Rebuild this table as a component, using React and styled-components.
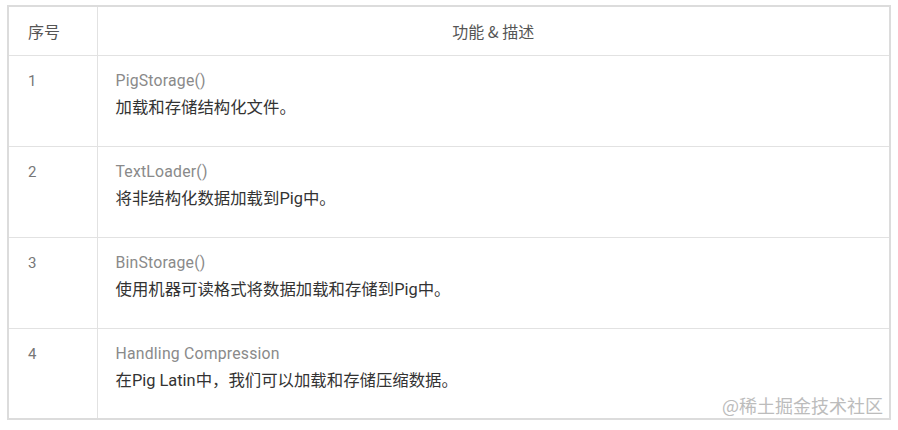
import React from 'react';
import styled, { createGlobalStyle } from 'styled-components';

const Global = createGlobalStyle`
  body {
    margin: 0;
    background: #fff;
    font-family: Roboto, "Noto Sans CJK SC", sans-serif;
  }
`;

const Page = styled.div`
  position: relative;
  width: 898px;
  height: 430px;
  padding: 5px 0 0 7px;
  box-sizing: border-box;
`;

const Table = styled.table`
  width: 884px;
  border-collapse: collapse;
  border: 2px solid #dcdcdc;
  table-layout: fixed;
`;

const Th = styled.th`
  box-sizing: border-box;
  height: 49px;
  padding: 0 0 0 ${p => (p.center ? 0 : 19)}px;
  border: 1px solid #e2e2e2;
  font-family: "Noto Sans CJK SC", sans-serif;
  font-weight: 400;
  font-size: 16px;
  color: #555;
  text-align: ${p => (p.center ? 'center' : 'left')};
  vertical-align: middle;
  width: ${p => p.w || 'auto'};
`;

const Td = styled.td`
  height: 91px;
  padding: 12px 0 0 ${p => p.pad || 18}px;
  box-sizing: border-box;
  border: 1px solid #e2e2e2;
  vertical-align: top;
`;

const Num = styled.div`
  font-size: 15px;
  line-height: 26px;
  color: #777;
`;

const Title = styled.div`
  font-size: 15.8px;
  line-height: 26px;
  color: #8a8a8a;
  letter-spacing: 0.2px;
`;

const Desc = styled.div`
  font-family: Roboto, "Noto Sans CJK SC", sans-serif;
  font-size: 16.4px;
  line-height: 28px;
  color: #333;
`;

const Watermark = styled.div`
  position: absolute;
  right: 15px;
  bottom: 12px;
  font-family: "Noto Sans CJK SC", sans-serif;
  font-size: 18px;
  color: #bcbcbc;
`;

const rows = [
  ['1', 'PigStorage()', '加载和存储结构化文件。'],
  ['2', 'TextLoader()', '将非结构化数据加载到Pig中。'],
  ['3', 'BinStorage()', '使用机器可读格式将数据加载和存储到Pig中。'],
  ['4', 'Handling Compression', '在Pig Latin中，我们可以加载和存储压缩数据。'],
];

export default function App() {
  return (
    <Page>
      <Global />
      <Table>
        <thead>
          <tr>
            <Th w="89px">序号</Th>
            <Th center>功能 &amp; 描述</Th>
          </tr>
        </thead>
        <tbody>
          {rows.map(([n, t, d]) => (
            <tr key={n}>
              <Td pad={19}><Num>{n}</Num></Td>
              <Td>
                <Title>{t}</Title>
                <Desc>{d}</Desc>
              </Td>
            </tr>
          ))}
        </tbody>
      </Table>
      <Watermark>@稀土掘金技术社区</Watermark>
    </Page>
  );
}
